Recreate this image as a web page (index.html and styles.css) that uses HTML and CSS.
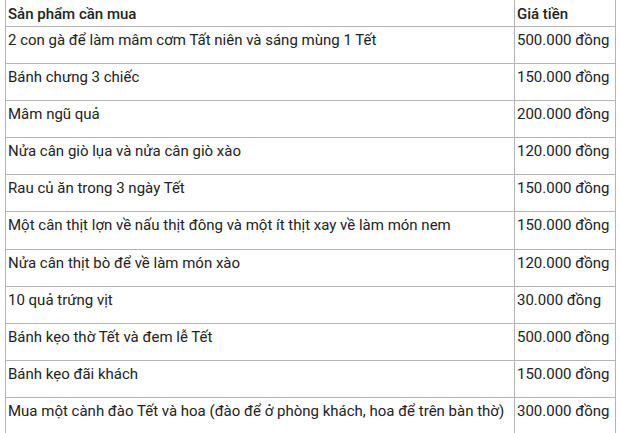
FILE: index.html
```html
<!DOCTYPE html>
<html lang="vi">
<head>
<meta charset="utf-8">
<title>Sản phẩm cần mua</title>
<link rel="stylesheet" href="styles.css">
</head>
<body>
<table class="list">
  <thead>
    <tr><th class="name">Sản phẩm cần mua</th><th class="price">Giá tiền</th></tr>
  </thead>
  <tbody>
    <tr><td>2 con gà để làm mâm cơm Tất niên và sáng mùng 1 Tết</td><td>500.000 đồng</td></tr>
    <tr><td>Bánh chưng 3 chiếc</td><td>150.000 đồng</td></tr>
    <tr><td>Mâm ngũ quả</td><td>200.000 đồng</td></tr>
    <tr><td>Nửa cân giò lụa và nửa cân giò xào</td><td>120.000 đồng</td></tr>
    <tr><td>Rau củ ăn trong 3 ngày Tết</td><td>150.000 đồng</td></tr>
    <tr><td>Một cân thịt lợn về nấu thịt đông và một ít thịt xay về làm món nem</td><td>150.000 đồng</td></tr>
    <tr><td>Nửa cân thịt bò để về làm món xào</td><td>120.000 đồng</td></tr>
    <tr><td>10 quả trứng vịt</td><td>30.000 đồng</td></tr>
    <tr><td>Bánh kẹo thờ Tết và đem lễ Tết</td><td>500.000 đồng</td></tr>
    <tr><td>Bánh kẹo đãi khách</td><td>150.000 đồng</td></tr>
    <tr><td>Mua một cành đào Tết và hoa (đào để ở phòng khách, hoa để trên bàn thờ)</td><td>300.000 đồng</td></tr>
  </tbody>
</table>
</body>
</html>
```
FILE: styles.css
```css
html, body {
  margin: 0;
  padding: 0;
  background: #ffffff;
}
body {
  font-family: Roboto, "Noto Sans", sans-serif;
  color: #222222;
  overflow: hidden;
}
.list {
  margin-left: 5px;
  width: 611px;
  border-collapse: collapse;
  table-layout: fixed;
  font-size: 15px;
}
.list th, .list td {
  border: 1px solid #b4b4b4;
  text-align: left;
  vertical-align: top;
  padding: 0 2px;
  line-height: 18px;
  white-space: nowrap;
}
.list th {
  border-top: none;
  font-weight: 500;
  padding-top: 5px;
  padding-bottom: 3px;
}
.list td {
  padding-top: 4px;
  padding-bottom: 14.1px;
}
.list .name { width: 504px; }
.list .price { width: 96px; }
```
